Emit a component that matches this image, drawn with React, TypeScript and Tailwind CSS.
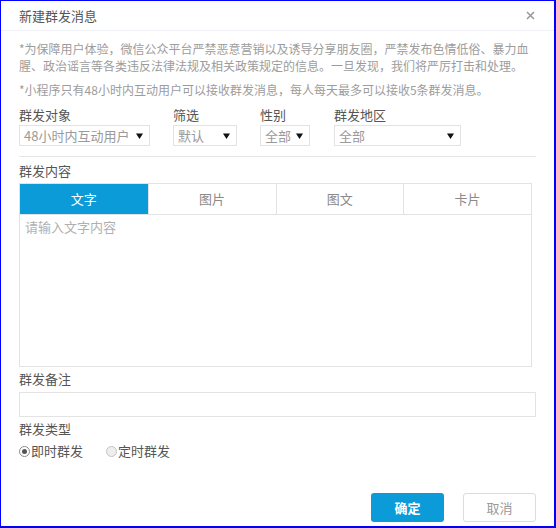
import React from 'react';

const FONT = { fontFamily: '"Noto Sans CJK SC", "Noto Sans", sans-serif' };

function Caret() {
  return (
    <svg width="7" height="6" viewBox="0 0 7 6" className="shrink-0">
      <path d="M0 0.5 H7 L3.5 6 Z" fill="#111" />
    </svg>
  );
}

function FakeSelect({ value, width }: { value: string; width: string }) {
  return (
    <div
      className={`${width} flex h-[21px] items-center justify-between border border-[#e3e3e3] bg-white pl-[4px] pr-[6px] text-[13px] leading-none text-[#9a9a9a]`}
    >
      <span className="whitespace-nowrap">{value}</span>
      <Caret />
    </div>
  );
}

function Field({
  label,
  value,
  width,
  className = '',
}: {
  label: string;
  value: string;
  width: string;
  className?: string;
}) {
  return (
    <div className={`flex flex-col ${className}`}>
      <div className="mb-[2px] text-[13px] leading-[16px] text-[#555]">{label}</div>
      <FakeSelect value={value} width={width} />
    </div>
  );
}

function Radio({ checked, label }: { checked?: boolean; label: string }) {
  return (
    <span className="flex items-center text-[13px] leading-[16px] text-[#555]">
      <span
        className={`mr-[1px] flex h-[11px] w-[11px] items-center justify-center rounded-full border ${
          checked ? 'border-[#8a8a8a] bg-white' : 'border-[#c4c4c4] bg-[#eeeeee]'
        }`}
      >
        {checked && <span className="h-[5px] w-[5px] rounded-full bg-[#555]" />}
      </span>
      {label}
    </span>
  );
}

const TABS = ['文字', '图片', '图文', '卡片'];

export default function App() {
  return (
    <div
      style={FONT}
      className="h-[528px] w-[556px] overflow-hidden border-t border-l border-r-2 border-b-2 border-[#0000ff] bg-white"
    >
      {/* header */}
      <div className="flex h-[30px] items-center justify-between border-b border-[#eef1f6] pl-[18px] pr-[19px]">
        <span className="text-[13px] text-[#555]">新建群发消息</span>
        <svg width="9" height="9" viewBox="0 0 9 9">
          <path d="M1 1 L8 8 M8 1 L1 8" stroke="#9a9a9a" strokeWidth="1.6" />
        </svg>
      </div>

      <div className="px-[18px]">
        <p className="mt-[9px] text-[12px] leading-[17px] text-[#9c9c9c]">
          *为保障用户体验，微信公众平台严禁恶意营销以及诱导分享朋友圈，严禁发布色情低俗、暴力血腥、政治谣言等各类违反法律法规及相关政策规定的信息。一旦发现，我们将严厉打击和处理。
        </p>
        <p className="mt-[7px] text-[12px] leading-[17px] text-[#9c9c9c]">
          *小程序只有48小时内互动用户可以接收群发消息，每人每天最多可以接收5条群发消息。
        </p>

        <div className="mt-[9px] flex">
          <Field label="群发对象" value="48小时内互动用户" width="w-[131px]" />
          <Field label="筛选" value="默认" width="w-[64px]" className="ml-[23px]" />
          <Field label="性别" value="全部" width="w-[50px]" className="ml-[23px]" />
          <Field label="群发地区" value="全部" width="w-[127px]" className="ml-[24px]" />
        </div>

        <div className="mt-[10px] h-px bg-[#e6e6e6]" />

        <div className="mt-[6px] text-[13px] leading-[16px] text-[#555]">群发内容</div>
        <div className="mt-[4px] w-[513px]">
          <div className="grid grid-cols-4 border border-[#e3e3e3]">
            {TABS.map((t, i) => (
              <div
                key={t}
                className={`flex h-[30px] items-center justify-center text-[13px] ${
                  i === 0 ? 'bg-[#0b9bd8] text-white' : 'border-l border-[#e3e3e3] text-[#8a8a8a]'
                }`}
              >
                {t}
              </div>
            ))}
          </div>
          <div className="h-[152px] border border-t-0 border-[#e3e3e3] px-[5px] pt-[4px] text-[13px] leading-[16px] text-[#b0b0b0]">
            请输入文字内容
          </div>
        </div>

        <div className="mt-[4px] text-[13px] leading-[16px] text-[#555]">群发备注</div>
        <div className="mt-[5px] h-[25px] border border-[#e3e3e3]" />

        <div className="mt-[4px] text-[13px] leading-[16px] text-[#555]">群发类型</div>
        <div className="mt-[6px] flex gap-[23px]">
          <Radio checked label="即时群发" />
          <Radio label="定时群发" />
        </div>

        <div className="mt-[34px] flex justify-end gap-[19px]">
          <button className="h-[29px] w-[73px] rounded-[3px] bg-[#0b9bd8] text-[13px] font-bold text-white">
            确定
          </button>
          <button className="h-[29px] w-[73px] rounded-[3px] border border-[#dcdcdc] bg-white text-[13px] text-[#9a9a9a]">
            取消
          </button>
        </div>
      </div>
    </div>
  );
}
